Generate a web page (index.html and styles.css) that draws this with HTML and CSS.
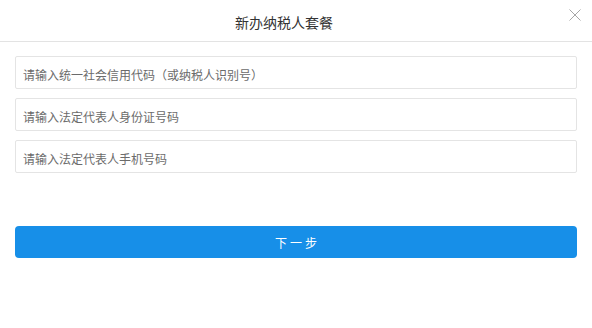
FILE: index.html
```html
<!DOCTYPE html>
<html lang="zh-CN">
<head>
  <meta charset="UTF-8">
  <title>新办纳税人套餐</title>
  <link rel="stylesheet" href="styles.css">
</head>
<body>
  <div class="dialog">
    <div class="dialog-header">
      <h1 class="dialog-title">新办纳税人套餐</h1>
      <button type="button" class="close-btn" aria-label="关闭">
        <svg width="12" height="12" viewBox="0 0 12 12"><path d="M0.5 0.5 L11.5 11.5 M11.5 0.5 L0.5 11.5" stroke="#a6a6a6" stroke-width="1" fill="none"/></svg>
      </button>
    </div>
    <form class="dialog-body" action="#">
      <input type="text" class="field" placeholder="请输入统一社会信用代码（或纳税人识别号）">
      <input type="text" class="field" placeholder="请输入法定代表人身份证号码">
      <input type="text" class="field" placeholder="请输入法定代表人手机号码">
      <button type="submit" class="next-btn">下一步</button>
    </form>
  </div>
</body>
</html>
```

FILE: styles.css
```css
html, body {
  margin: 0;
  padding: 0;
  background: #fff;
  font-family: "Microsoft YaHei", "Noto Sans CJK SC", sans-serif;
  color: #333;
}
.dialog {
  width: 592px;
  height: 328px;
  box-sizing: border-box;
}
.dialog-header {
  position: relative;
  height: 41px;
  border-bottom: 1px solid #e3e3e3;
  display: flex;
  align-items: center;
  justify-content: center;
}
.dialog-title {
  margin: 0 24px 0 0;
  padding-top: 3px;
  font-size: 14px;
  font-weight: normal;
  color: #333;
  letter-spacing: 0;
}
.close-btn {
  position: absolute;
  top: 9px;
  right: 11px;
  width: 12px;
  height: 12px;
  padding: 0;
  border: none;
  background: none;
  cursor: pointer;
  display: flex;
}
.dialog-body {
  display: flex;
  flex-direction: column;
  padding: 14px 15px 0;
}
.field {
  height: 33px;
  margin-bottom: 9px;
  padding: 3px 7px 0;
  box-sizing: border-box;
  border: 1px solid #e4e4e4;
  border-radius: 2px;
  font-family: inherit;
  font-size: 12px;
  color: #333;
  outline: none;
}
.field::placeholder {
  color: #6b6b6b;
}
.next-btn {
  margin-top: 44px;
  height: 32px;
  border: none;
  border-radius: 4px;
  background: #178fe8;
  color: #fff;
  font-family: inherit;
  font-size: 12px;
  letter-spacing: 3px;
  padding: 0 0 0 3px;
  cursor: pointer;
}
```
